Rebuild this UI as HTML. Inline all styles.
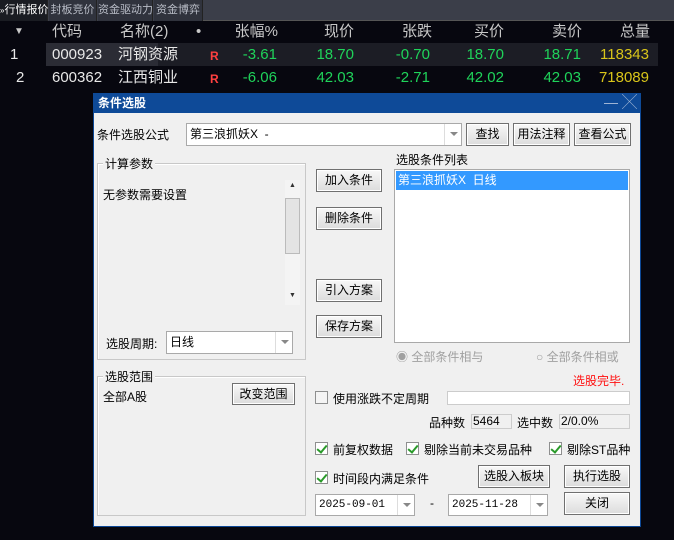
<!DOCTYPE html>
<html><head><meta charset="utf-8"><style>
*{margin:0;padding:0;box-sizing:border-box}
body{width:674px;height:540px;background:#07070f;position:relative;overflow:hidden;font-family:"Liberation Sans","Noto Sans CJK SC",sans-serif;font-size:12px;color:#000}
.a{position:absolute;white-space:nowrap}
.tabs{left:0;top:0;width:674px;height:21px;background:#3b3e49}
.tab{top:0;height:21px;line-height:21px;font-size:11px;color:#b8bcc6;background:#30333d;text-align:center;border-right:1px solid #222}
.hd{font-size:15px;color:#c8c8c8;top:21px;height:22px;line-height:22px}
.r{font-size:15px;top:0;line-height:23px;text-align:right}
.g{color:#1fd35a}.y{color:#d9c51a}.w{color:#e8e8e8}
.btn{background:linear-gradient(#f8f8f8,#dcdcdc);border:1px solid #707070;text-align:center;font-size:12px;line-height:20px;box-shadow:inset 0 0 0 1px #fff}
.inp{background:#fff;border:1px solid #a9a9a9;line-height:20px;padding-left:3px}
.dd{position:absolute;right:0;top:0;width:17px;height:100%;border-left:1px solid #ddd}
.dd:after{content:"";position:absolute;left:5px;top:8px;border:4px solid transparent;border-top:4px solid #888}
.grp{border:1px solid #c8c8c8;box-shadow:1px 1px 0 #fff inset}
.gl{background:#f0f0f0;padding:0 2px}
.cb{width:13px;height:13px;border:1px solid #8e8f8f;background:#fff}
.ck:after{content:"";position:absolute;left:3px;top:0px;width:4px;height:8px;border:solid #2a9a2a;border-width:0 2px 2px 0;transform:rotate(40deg)}
</style></head><body>
<div class="a tabs"></div>
<div class="a tab" style="left:0;width:48px;background:#1a1c22;color:#fff;text-align:left"><span style="font-size:8px">»</span>行情报价</div>
<div class="a tab" style="left:49px;width:48px">封板竞价</div>
<div class="a tab" style="left:98px;width:55px">资金驱动力</div>
<div class="a tab" style="left:154px;width:49px">资金博弈</div>
<div class="a" style="left:203px;top:20px;width:471px;height:1px;background:#555"></div>

<div class="a hd" style="left:14px;font-size:10px">▼</div>
<div class="a hd" style="left:52px">代码</div>
<div class="a hd" style="left:120px">名称(2)</div>
<div class="a hd" style="left:196px">•</div>
<div class="a hd" style="left:230px;width:48px;text-align:right">张幅%</div>
<div class="a hd" style="left:300px;width:54px;text-align:right">现价</div>
<div class="a hd" style="left:380px;width:52px;text-align:right">张跌</div>
<div class="a hd" style="left:450px;width:54px;text-align:right">买价</div>
<div class="a hd" style="left:530px;width:52px;text-align:right">卖价</div>
<div class="a hd" style="left:600px;width:50px;text-align:right">总量</div>

<div class="a" style="left:0;top:43px;width:674px;height:23px">
<div class="a" style="left:46px;top:0;width:612px;height:23px;background:#1c1d25"></div>
<div class="a" style="left:46px;top:0;width:112px;height:23px;background:#2b2c35"></div>
<div class="a r w" style="left:10px;width:20px;text-align:left">1</div>
<div class="a r w" style="left:52px;text-align:left">000923</div>
<div class="a r w" style="left:118px;text-align:left">河钢资源</div>
<div class="a r" style="left:210px;color:#ff4040;font-size:12px;font-weight:bold;top:2px">R</div>
<div class="a r g" style="left:220px;width:57px">-3.61</div>
<div class="a r g" style="left:290px;width:64px">18.70</div>
<div class="a r g" style="left:370px;width:60px">-0.70</div>
<div class="a r g" style="left:440px;width:64px">18.70</div>
<div class="a r g" style="left:520px;width:61px">18.71</div>
<div class="a r y" style="left:590px;width:59px">118343</div>
</div>
<div class="a" style="left:0;top:66px;width:674px;height:23px">
<div class="a r w" style="left:16px;text-align:left">2</div>
<div class="a r w" style="left:52px;text-align:left">600362</div>
<div class="a r w" style="left:118px;text-align:left">江西铜业</div>
<div class="a r" style="left:210px;color:#ff4040;font-size:12px;font-weight:bold;top:2px">R</div>
<div class="a r g" style="left:220px;width:57px">-6.06</div>
<div class="a r g" style="left:290px;width:64px">42.03</div>
<div class="a r g" style="left:370px;width:60px">-2.71</div>
<div class="a r g" style="left:440px;width:64px">42.02</div>
<div class="a r g" style="left:520px;width:61px">42.03</div>
<div class="a r y" style="left:590px;width:59px">718089</div>
</div>

<!-- dialog -->
<div class="a" style="left:93px;top:93px;width:548px;height:434px;background:#f0f0f0;border:1px solid #0d4896"></div>
<div class="a" style="left:93px;top:93px;width:548px;height:20px;background:#0e4a98"></div>
<div class="a" style="left:98px;top:94px;color:#fff;font-weight:bold;font-size:12px;line-height:18px">条件选股</div>
<div class="a" style="left:604px;top:103px;width:14px;height:1px;background:#9fb4d4"></div>
<div class="a" style="left:622px;top:95px;color:#9fb4d4;font-size:15px;line-height:16px">╳</div>

<div class="a" style="left:97px;top:126px">条件选股公式</div>
<div class="a inp" style="left:186px;top:123px;width:276px;height:23px">第三浪抓妖X&nbsp; -<div class="dd"></div></div>
<div class="a btn" style="left:466px;top:123px;width:43px;height:23px">查找</div>
<div class="a btn" style="left:513px;top:123px;width:57px;height:23px">用法注释</div>
<div class="a btn" style="left:574px;top:123px;width:57px;height:23px">查看公式</div>

<div class="a grp" style="left:97px;top:163px;width:209px;height:197px"></div>
<div class="a gl" style="left:103px;top:155px">计算参数</div>
<div class="a" style="left:103px;top:186px">无参数需要设置</div>
<div class="a" style="left:285px;top:180px;width:15px;height:125px;background:#f4f4f4"></div>
<div class="a" style="left:289px;top:182px;font-size:7px;color:#333">▲</div>
<div class="a" style="left:289px;top:292px;font-size:7px;color:#333">▼</div>
<div class="a" style="left:285px;top:198px;width:15px;height:56px;background:#e4e4e4;border:1px solid #bbb"></div>
<div class="a" style="left:106px;top:335px">选股周期:</div>
<div class="a inp" style="left:166px;top:331px;width:127px;height:23px">日线<div class="dd"></div></div>

<div class="a btn" style="left:316px;top:169px;width:66px;height:23px">加入条件</div>
<div class="a btn" style="left:316px;top:207px;width:66px;height:23px">删除条件</div>
<div class="a btn" style="left:316px;top:279px;width:66px;height:23px">引入方案</div>
<div class="a btn" style="left:316px;top:315px;width:66px;height:23px">保存方案</div>

<div class="a" style="left:396px;top:151px">选股条件列表</div>
<div class="a" style="left:394px;top:169px;width:236px;height:174px;background:#fff;border:1px solid #a9a9a9"></div>
<div class="a" style="left:396px;top:171px;width:232px;height:19px;background:#3399ff;color:#fff;line-height:19px;padding-left:2px">第三浪抓妖X&nbsp; 日线</div>

<div class="a" style="left:396px;top:348px;color:#a0a0a0">◉ 全部条件相与</div>
<div class="a" style="left:536px;top:348px;color:#a0a0a0">○ 全部条件相或</div>
<div class="a" style="left:573px;top:372px;color:#ff1010">选股完毕.</div>

<div class="a grp" style="left:97px;top:376px;width:209px;height:140px"></div>
<div class="a gl" style="left:103px;top:368px">选股范围</div>
<div class="a" style="left:103px;top:388px">全部A股</div>
<div class="a btn" style="left:232px;top:383px;width:63px;height:22px">改变范围</div>

<div class="a cb" style="left:315px;top:391px;background:#f4f4f4"></div>
<div class="a" style="left:333px;top:390px">使用涨跌不定周期</div>
<div class="a" style="left:447px;top:391px;width:183px;height:14px;background:#fff;border:1px solid #ccc"></div>

<div class="a" style="left:429px;top:414px">品种数</div>
<div class="a" style="left:471px;top:414px;width:41px;height:15px;border:1px solid #ccc;line-height:13px;padding-left:1px">5464</div>
<div class="a" style="left:517px;top:414px">选中数</div>
<div class="a" style="left:559px;top:414px;width:71px;height:15px;border:1px solid #ccc;line-height:13px;padding-left:1px">2/0.0%</div>

<div class="a cb ck" style="left:315px;top:442px"></div><div class="a" style="left:333px;top:441px">前复权数据</div>
<div class="a cb ck" style="left:406px;top:442px"></div><div class="a" style="left:424px;top:441px">剔除当前未交易品种</div>
<div class="a cb ck" style="left:549px;top:442px"></div><div class="a" style="left:567px;top:441px">剔除ST品种</div>
<div class="a cb ck" style="left:315px;top:471px"></div><div class="a" style="left:333px;top:470px">时间段内满足条件</div>
<div class="a btn" style="left:478px;top:465px;width:72px;height:23px">选股入板块</div>
<div class="a btn" style="left:564px;top:465px;width:66px;height:23px">执行选股</div>

<div class="a inp" style="left:315px;top:494px;width:100px;height:22px;font-family:'Liberation Mono',monospace;font-size:11px">2025-09-01<div class="dd"></div></div>
<div class="a" style="left:430px;top:496px">-</div>
<div class="a inp" style="left:448px;top:494px;width:100px;height:22px;font-family:'Liberation Mono',monospace;font-size:11px">2025-11-28<div class="dd"></div></div>
<div class="a btn" style="left:564px;top:492px;width:66px;height:23px">关闭</div>
</body></html>
